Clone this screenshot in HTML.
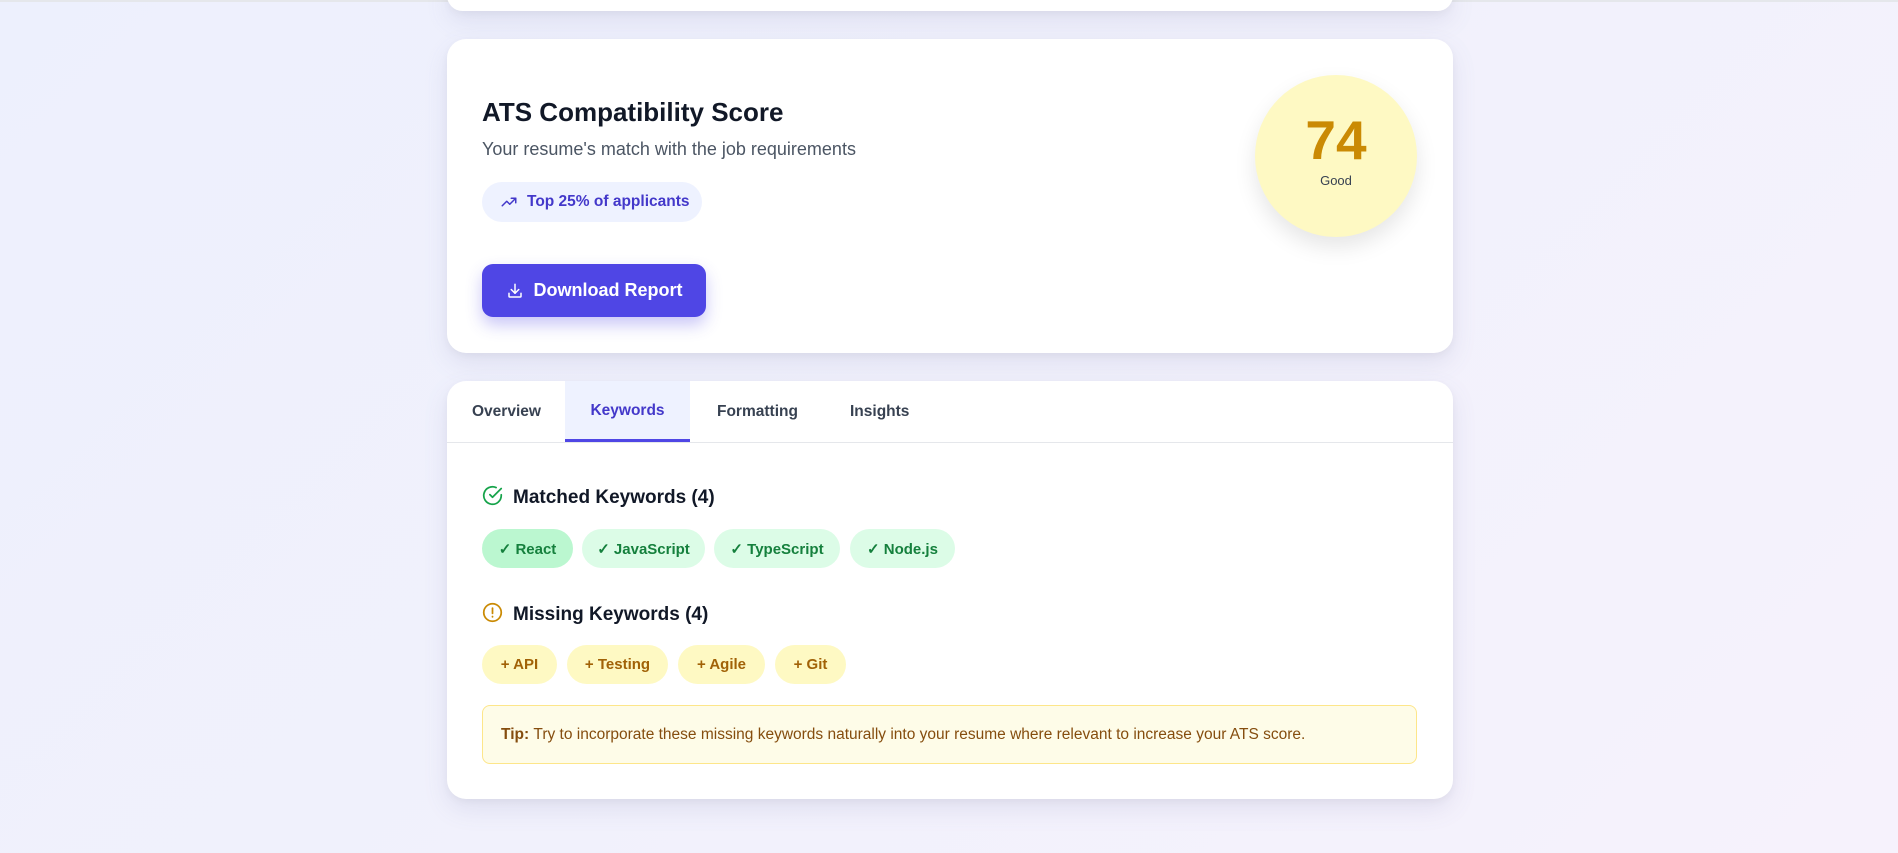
<!DOCTYPE html>
<html><head><meta charset="utf-8"><style>
*{box-sizing:border-box;margin:0;padding:0}
body{width:1898px;height:853px;overflow:hidden;font-family:"Liberation Sans",sans-serif;background:linear-gradient(135deg,#edf0fd 0%,#f1f1fc 50%,#f6f2fc 100%);position:relative}
.topline{position:absolute;left:0;top:0;width:1898px;height:2px;background:#e5e7eb}
.card{position:absolute;left:447px;width:1006px;background:#fff;border-radius:19px;box-shadow:0 10px 25px rgba(100,100,160,.12),0 3px 8px rgba(0,0,0,.04)}
.abs{position:absolute}
.chip{position:absolute;height:39px;border-radius:20px;font-size:15px;font-weight:bold;display:flex;align-items:center;justify-content:center}
.g{background:#dcfce7;color:#15803d}
.y{background:#fef9c3;color:#a16207}
.tab{position:absolute;top:0;height:61px;display:flex;align-items:center;font-size:15.5px;font-weight:bold;color:#374151}
</style></head><body>
<div class="topline"></div>
<div class="card" style="top:-20px;height:31px"></div>

<div class="card" style="top:39px;height:314px">
  <div class="abs" style="left:35px;top:58px;font-size:26px;font-weight:bold;color:#111827">ATS Compatibility Score</div>
  <div class="abs" style="left:35px;top:100px;font-size:18px;color:#4b5563">Your resume's match with the job requirements</div>
  <div class="abs" style="left:35px;top:143px;width:220px;height:40px;border-radius:20px;background:#eef2ff;color:#4338ca;font-size:15.5px;font-weight:bold;display:flex;align-items:center;padding-left:18px">
    <svg width="18" height="18" viewBox="0 0 24 24" fill="none" stroke="#4338ca" stroke-width="2" stroke-linecap="round" stroke-linejoin="round" style="margin-right:9px"><path d="M3 17l6-6 4 4 8-8"/><path d="M15 7h6v6"/></svg>Top 25% of applicants</div>
  <div class="abs" style="left:35px;top:225px;width:224px;height:53px;border-radius:11px;background:#4f46e5;color:#fff;font-size:18px;font-weight:bold;display:flex;align-items:center;justify-content:center;box-shadow:0 8px 16px rgba(79,70,229,.3)">
    <svg width="18" height="18" viewBox="0 0 24 24" fill="none" stroke="#fff" stroke-width="2" stroke-linecap="round" stroke-linejoin="round" style="margin-right:10px"><path d="M4 15v4a1 1 0 0 0 1 1h14a1 1 0 0 0 1-1v-4"/><path d="M12 3v12"/><path d="M7 10l5 5 5-5"/></svg>Download Report</div>
  <div class="abs" style="left:808px;top:36px;width:162px;height:162px;border-radius:50%;background:#fef9c3;box-shadow:0 10px 22px rgba(0,0,0,.1);text-align:center">
    <div style="margin-top:38px;font-size:55px;font-weight:bold;color:#ca8a04;line-height:55px">74</div>
    <div style="font-size:13px;color:#374151;margin-top:5px">Good</div>
  </div>
</div>

<div class="card" style="top:381px;height:418px;overflow:hidden">
  <div class="abs" style="left:0;top:61px;width:1006px;height:1px;background:#e5e7eb"></div>
  <div class="tab" style="left:25px">Overview</div>
  <div class="tab" style="left:118px;width:125px;background:#eef2ff;color:#4338ca;justify-content:center;border-bottom:3px solid #4f46e5;padding-top:2px">Keywords</div>
  <div class="tab" style="left:270px">Formatting</div>
  <div class="tab" style="left:403px">Insights</div>

  <svg class="abs" style="left:35px;top:104px" width="21" height="21" viewBox="0 0 24 24" fill="none" stroke="#16a34a" stroke-width="2" stroke-linecap="round" stroke-linejoin="round"><path d="M22 11.1V12a10 10 0 1 1-5.9-9.1"/><path d="M22 4L12 14l-3-3"/></svg>
  <div class="abs" style="left:66px;top:106px;font-size:19px;font-weight:bold;color:#111827">Matched Keywords (4)</div>
  <div class="chip g" style="left:35px;top:148px;width:91px;background:#bbf7d0">✓ React</div>
  <div class="chip g" style="left:135px;top:148px;width:123px">✓ JavaScript</div>
  <div class="chip g" style="left:267px;top:148px;width:126px">✓ TypeScript</div>
  <div class="chip g" style="left:403px;top:148px;width:105px">✓ Node.js</div>

  <svg class="abs" style="left:35px;top:221px" width="21" height="21" viewBox="0 0 24 24" fill="none" stroke="#ca8a04" stroke-width="2" stroke-linecap="round"><circle cx="12" cy="12" r="10"/><path d="M12 7v6"/><path d="M12 16.5v.5"/></svg>
  <div class="abs" style="left:66px;top:223px;font-size:19px;font-weight:bold;color:#111827">Missing Keywords (4)</div>
  <div class="chip y" style="left:35px;top:264px;width:75px">+ API</div>
  <div class="chip y" style="left:120px;top:264px;width:101px">+ Testing</div>
  <div class="chip y" style="left:231px;top:264px;width:87px">+ Agile</div>
  <div class="chip y" style="left:328px;top:264px;width:71px">+ Git</div>

  <div class="abs" style="left:35px;top:324px;width:935px;height:59px;border:1px solid #fde68a;border-radius:8px;background:#fefce8;font-size:15.5px;color:#854d0e;display:flex;align-items:center;padding-left:18px"><b>Tip:</b>&nbsp;Try to incorporate these missing keywords naturally into your resume where relevant to increase your ATS score.</div>
</div>
</body></html>
